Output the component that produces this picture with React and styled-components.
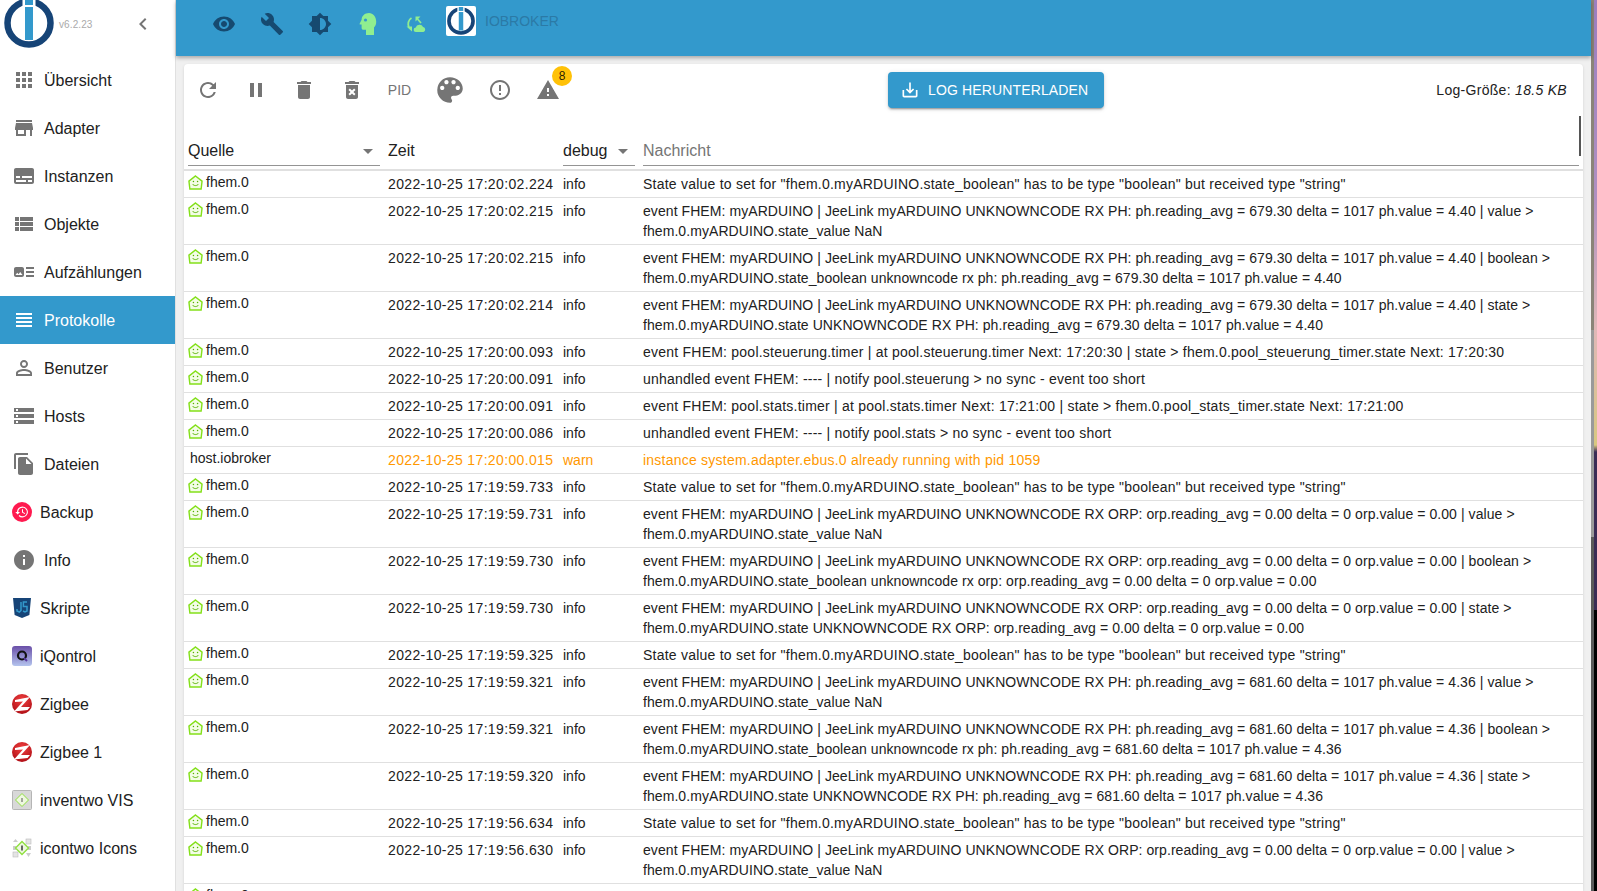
import React from "react";
import styled, { createGlobalStyle } from "styled-components";
import {
  MdApps,
  MdStore,
  MdSubtitles,
  MdViewList,
  MdArtTrack,
  MdViewHeadline,
  MdPersonOutline,
  MdStorage,
  MdFileCopy,
  MdInfo,
  MdChevronLeft,
  MdVisibility,
  MdBuild,
  MdBrightness6,
  MdRefresh,
  MdPause,
  MdDelete,
  MdDeleteForever,
  MdColorLens,
  MdErrorOutline,
  MdWarning,
  MdSaveAlt,
} from "react-icons/md";

const GlobalStyle = createGlobalStyle`
  html, body {
    margin: 0;
    height: 100%;
    overflow: hidden;
    background: #fff;
    font-family: "Liberation Sans", Arial, sans-serif;
  }
`;

const Page = styled.div`
  display: flex;
  width: 1597px;
  height: 891px;
  overflow: hidden;
`;

const Drawer = styled.aside`
  flex: 0 0 175px;
  border-right: 1px solid #e0e0e0;
  background: #fff;
`;

const DrawerHead = styled.div`
  display: flex;
  align-items: flex-start;
  height: 56px;
  padding-left: 4px;
  overflow: hidden;
  > svg {
    flex: none;
    margin-top: -2px;
  }
`;

const Version = styled.span`
  margin: 19px 0 0 5px;
  font-size: 10px;
  line-height: 12px;
  color: #aaa;
  letter-spacing: 0.1px;
`;

const Collapse = styled.span`
  display: flex;
  margin: 12px 0 0 38px;
  color: #757575;
  font-size: 24px;
`;

const NavItem = styled.div`
  display: flex;
  align-items: center;
  height: 48px;
  padding-left: 12px;
  background: ${(p) => (p.$active ? "#3399cc" : "transparent")};
  color: ${(p) => (p.$active ? "#fff" : "#212121")};
  font-size: 16px;
  svg {
    flex: none;
    color: ${(p) => (p.$active ? "#fff" : "#757575")};
  }
`;

const NavLabel = styled.span`
  margin-left: 8px;
  padding-top: 2px;
`;

const Main = styled.main`
  flex: 1;
  min-width: 0;
  display: flex;
  flex-direction: column;
  background: #f0f0f0;
`;

const AppBar = styled.header`
  flex: 0 0 56px;
  display: flex;
  align-items: flex-start;
  background: #3399cc;
  box-shadow: 0 2px 4px rgba(0, 0, 0, 0.3);
  padding-left: 24px;
  z-index: 1;
`;

const BarIcon = styled.span`
  display: flex;
  width: 48px;
  height: 48px;
  align-items: center;
  justify-content: center;
  color: #164a70;
  font-size: 24px;
`;

const BrandLogo = styled.span`
  display: flex;
  align-items: center;
  justify-content: center;
  width: 30px;
  height: 30px;
  margin: 6px 0 0 6px;
  background: #fff;
  border-radius: 2px;
`;

const BrandName = styled.span`
  margin: 13px 0 0 9px;
  font-size: 14px;
  color: #2b7aa6;
`;

const Panel = styled.section`
  flex: 1;
  min-height: 0;
  margin: 8px 8px 0 8px;
  background: #fff;
  border-radius: 4px 4px 0 0;
  box-shadow: 0 1px 3px rgba(0, 0, 0, 0.12);
  overflow: hidden;
`;

const Toolbar = styled.div`
  display: flex;
  align-items: center;
  height: 52px;
  padding-right: 16px;
`;

const ToolIcon = styled.span`
  position: relative;
  display: flex;
  flex: none;
  width: ${(p) => p.$width || 48}px;
  height: 48px;
  align-items: center;
  justify-content: center;
  color: #757575;
  font-size: ${(p) => p.$size || 24}px;
`;

const PidLabel = styled(ToolIcon)`
  font-size: 14px;
`;

const Badge = styled.span`
  position: absolute;
  top: 0;
  right: 0;
  width: 20px;
  height: 20px;
  border-radius: 50%;
  background: #ffc107;
  color: rgba(0, 0, 0, 0.87);
  font-size: 12px;
  line-height: 20px;
  text-align: center;
`;

const DownloadButton = styled.button`
  display: flex;
  align-items: center;
  gap: 8px;
  height: 36px;
  margin-left: 316px;
  padding: 0 16px 0 12px;
  border: 0;
  border-radius: 4px;
  background: #3399cc;
  color: #fff;
  font-family: inherit;
  font-size: 14px;
  letter-spacing: 0.14px;
  box-shadow: 0 3px 1px -2px rgba(0, 0, 0, 0.2), 0 2px 2px rgba(0, 0, 0, 0.14),
    0 1px 5px rgba(0, 0, 0, 0.12);
  svg {
    font-size: 20px;
  }
`;

const LogSize = styled.span`
  margin-left: auto;
  font-size: 14px;
  letter-spacing: 0.3px;
  color: #212121;
`;

const Table = styled.div`
  position: relative;
  padding-top: 14px;
`;

const HeadRow = styled.div`
  display: grid;
  grid-template-columns: 200px 175px 80px 1fr;
  height: 39px;
  border-bottom: 2px solid #e0e0e0;
`;

const HeadCell = styled.div`
  display: flex;
  align-items: center;
  justify-content: space-between;
  margin: 0 4px 3px 4px;
  padding-top: 6px;
  border-bottom: 1px solid ${(p) => (p.$plain ? "transparent" : "#949494")};
  font-size: 16px;
  color: ${(p) => (p.$muted ? "#757575" : "#212121")};
  svg {
    color: #757575;
  }
`;

const ScrollMark = styled.div`
  position: absolute;
  top: 0;
  right: 2px;
  width: 2px;
  height: 40px;
  background: #555;
`;

const LogRow = styled.div`
  display: grid;
  grid-template-columns: 200px 175px 80px 1fr;
  align-items: start;
  border-bottom: 1px solid #e0e0e0;
  min-height: ${(p) => (p.$double ? "46px" : "26px")};
  font-size: 14px;
  line-height: 20px;
  color: ${(p) => (p.$warn ? "#ff9800" : "#212121")};
`;

const Source = styled.div`
  display: flex;
  align-items: center;
  gap: 3px;
  height: 20px;
  margin-top: 1px;
  padding-left: ${(p) => (p.$host ? "6px" : "4px")};
  color: #212121;
`;

const TimeCell = styled.div`
  padding: 3px 0 3px 4px;
  letter-spacing: 0.35px;
`;

const LevelCell = styled.div`
  padding: 3px 4px;
`;

const Message = styled.div`
  padding: 3px 4px;
  white-space: pre-line;
  letter-spacing: ${(p) => (p.$caps ? "0.07px" : "0.23px")};
`;

const Edge = styled.div`
  flex: 0 0 6px;
  display: flex;
`;

const EdgeLeft = styled.div`
  flex: 1;
  background: linear-gradient(
    #8a8478 0,
    #8a8478 330px,
    #9a9a9a 330px,
    #9a9a9a 537px,
    #5a5a5a 537px
  );
`;

const EdgeRight = styled.div`
  flex: 1;
  background: linear-gradient(
    #9b7fc0 0,
    #b090c0 200px,
    #e0b8b8 330px,
    #d8c880 445px,
    #3a2c55 452px,
    #3a2c55 610px,
    #000 610px
  );
`;

const IoLogo = ({ size }) => (
  <svg width={size} height={size} viewBox="0 0 50 50">
    <circle cx="25" cy="25" r="21.5" fill="none" stroke="#164477" strokeWidth="6.5" />
    <rect x="18.5" y="-2" width="13" height="11" fill="#fff" />
    <rect x="21" y="0" width="8" height="7" fill="#3399cc" />
    <rect x="21" y="9" width="8" height="33" fill="#3399cc" />
  </svg>
);

const FhemIcon = () => (
  <svg width="15" height="15" viewBox="0 0 16 16" fill="none">
    <path d="M8 1 15 6.500 14 15H2L1 6.500Z" stroke="#84e01a" strokeWidth="1.500" fill="#f3fde6" />
    <circle cx="5.800" cy="7" r=".8" fill="#55b000" />
    <circle cx="10.200" cy="7" r=".8" fill="#55b000" />
    <path d="M4.800 9.600c1.400 2.200 5 2.200 6.400 0" stroke="#55b000" strokeWidth="1" />
  </svg>
);

const HeadIcon = () => (
  <svg width="24" height="24" viewBox="0 0 24 24">
    <path
      d="M13 1c-4.200 0-7.400 2.900-7.400 6.800l-2 3.900c-.2.400 0 .8.400.8h1.600v3.400c0 1 .8 1.800 1.800 1.800H10V23h8v-7.500c1.500-1.500 2.200-3.500 2.200-5.800C20.200 4.800 17 1 13 1z"
      fill="#90ee90"
    />
    <circle cx="9.500" cy="8" r="1.600" fill="#3399cc" />
  </svg>
);

const CloudSyncIcon = () => (
  <svg width="24" height="24" viewBox="0 0 24 24">
    <path d="M12 20a2.200 2.200 0 0 1-.3-4.400 4 4 0 0 1 7.400-.6 2.600 2.600 0 0 1 .4 5z" fill="#90ee90" />
    <path d="M7.500 6C4 8 3.500 12.500 5 15" fill="none" stroke="#90ee90" strokeWidth="1.800" />
    <path d="M2.500 14.500h5.500v5z" fill="#90ee90" />
    <path d="M13.500 7 17 11" fill="none" stroke="#90ee90" strokeWidth="1.600" />
    <path d="M11.500 4.500h5l-5 5z" fill="#90ee90" />
  </svg>
);

const JsIcon = () => (
  <svg width="20" height="20" viewBox="0 0 20 20">
    <path d="M1 0h18l-1.600 17L10 20l-7.400-3z" fill="#164477" />
    <path d="M9 4v8.500l-1.600 1.500-2.400-1V11M15 4h-3.600v4.500H15V13l-2 1-2-1" fill="none" stroke="#3399cc" strokeWidth="1.500" />
  </svg>
);

const QontrolIcon = () => (
  <svg width="20" height="20" viewBox="0 0 20 20">
    <defs>
      <linearGradient id="qontrolFill" x1="0" y1="0" x2="0" y2="1">
        <stop offset="0" stopColor="#6a4fa8" />
        <stop offset="1" stopColor="#b4c4ee" />
      </linearGradient>
    </defs>
    <rect width="20" height="20" rx="3" fill="url(#qontrolFill)" />
    <circle cx="10" cy="9.500" r="4" fill="none" stroke="#111" strokeWidth="2.200" />
    <path d="M12 12l3 3" stroke="#5b3aa0" strokeWidth="2" />
  </svg>
);

const ZigbeeIcon = () => (
  <svg width="20" height="20" viewBox="0 0 20 20">
    <defs>
      <radialGradient id="zigbeeFill" cx=".5" cy=".3" r=".8">
        <stop offset="0" stopColor="#f04040" />
        <stop offset="1" stopColor="#a80810" />
      </radialGradient>
    </defs>
    <circle cx="10" cy="10" r="10" fill="url(#zigbeeFill)" />
    <path d="M3 6 18 3 9 13H18L15.500 16 2 17.500 11 7.500 3 8z" fill="#fff" />
  </svg>
);

const BackupIcon = () => (
  <svg width="20" height="20" viewBox="0 0 20 20">
    <circle cx="10" cy="10" r="10" fill="#ff1a4f" />
    <path
      d="M10.500 4.500a5.500 5.500 0 0 0-5.500 5.500H3.300l2.400 2.400L8 10H6.200a4.300 4.300 0 1 1 1.300 3.100l-.9.900a5.500 5.500 0 1 0 3.900-9.500zM10 7.200v3.300l2.700 1.600.5-.8-2.200-1.300V7.200z"
      fill="#fff"
    />
  </svg>
);

const VisIcon = () => (
  <svg width="20" height="20" viewBox="0 0 20 20">
    <rect x=".5" y=".5" width="19" height="19" rx="1" fill="#d8d8d8" stroke="#b5b5b5" />
    <path d="M10 3.500 16.500 10 10 16.500 3.500 10Z" fill="#eef8e0" stroke="#90e040" strokeWidth="1" />
    <rect x="9.500" y="8" width="1" height="4" fill="#555" />
  </svg>
);

const IconsIcon = () => (
  <svg width="20" height="20" viewBox="0 0 20 20">
    <rect x="14" y="1" width="5" height="5" fill="#e4e4e4" stroke="#bbb" strokeWidth=".6" />
    <rect x="1" y="14" width="5" height="5" fill="#e4e4e4" stroke="#bbb" strokeWidth=".6" />
    <path d="M3.500 1 6 4H1ZM16.500 19 14 15h5ZM1 8h3v4H1ZM16 8h3v4h-3Z" fill="#ccc" />
    <path d="M10 3.500 16.500 10 10 16.500 3.500 10Z" fill="#eef8e0" stroke="#90e040" strokeWidth="1.400" />
    <rect x="9.200" y="7.500" width="1.600" height="5" fill="#444" />
  </svg>
);

const Caret = () => (
  <svg width="24" height="24" viewBox="0 0 24 24" fill="currentColor">
    <path d="M7 10l5 5 5-5z" />
  </svg>
);

const navItems = [
  { label: "Übersicht", icon: <MdApps size={24} /> },
  { label: "Adapter", icon: <MdStore size={24} /> },
  { label: "Instanzen", icon: <MdSubtitles size={24} /> },
  { label: "Objekte", icon: <MdViewList size={24} /> },
  { label: "Aufzählungen", icon: <MdArtTrack size={24} /> },
  { label: "Protokolle", icon: <MdViewHeadline size={24} />, active: true },
  { label: "Benutzer", icon: <MdPersonOutline size={24} /> },
  { label: "Hosts", icon: <MdStorage size={24} /> },
  { label: "Dateien", icon: <MdFileCopy size={24} /> },
  { label: "Backup", icon: <BackupIcon /> },
  { label: "Info", icon: <MdInfo size={24} /> },
  { label: "Skripte", icon: <JsIcon /> },
  { label: "iQontrol", icon: <QontrolIcon /> },
  { label: "Zigbee", icon: <ZigbeeIcon /> },
  { label: "Zigbee 1", icon: <ZigbeeIcon /> },
  { label: "inventwo VIS", icon: <VisIcon /> },
  { label: "icontwo Icons", icon: <IconsIcon /> },
];

const stateMsg =
  'State value to set for "fhem.0.myARDUINO.state_boolean" has to be type "boolean" but received type "string"';

const phEvent = (avg, value, kind, second) =>
  `event FHEM: myARDUINO | JeeLink myARDUINO UNKNOWNCODE RX PH: ph.reading_avg = ${avg} delta = 1017 ph.value = ${value} | ${kind} >\n${second}`;

const orpEvent = (kind, second) =>
  `event FHEM: myARDUINO | JeeLink myARDUINO UNKNOWNCODE RX ORP: orp.reading_avg = 0.00 delta = 0 orp.value = 0.00 | ${kind} >\n${second}`;

const rows = [
  ["17:20:02.224", stateMsg],
  ["17:20:02.215", phEvent("679.30", "4.40", "value", "fhem.0.myARDUINO.state_value NaN")],
  ["17:20:02.215", phEvent("679.30", "4.40", "boolean", "fhem.0.myARDUINO.state_boolean unknowncode rx ph: ph.reading_avg = 679.30 delta = 1017 ph.value = 4.40")],
  ["17:20:02.214", phEvent("679.30", "4.40", "state", "fhem.0.myARDUINO.state UNKNOWNCODE RX PH: ph.reading_avg = 679.30 delta = 1017 ph.value = 4.40")],
  ["17:20:00.093", "event FHEM: pool.steuerung.timer | at pool.steuerung.timer Next: 17:20:30 | state > fhem.0.pool_steuerung_timer.state Next: 17:20:30"],
  ["17:20:00.091", "unhandled event FHEM: ---- | notify pool.steuerung > no sync - event too short"],
  ["17:20:00.091", "event FHEM: pool.stats.timer | at pool.stats.timer Next: 17:21:00 | state > fhem.0.pool_stats_timer.state Next: 17:21:00"],
  ["17:20:00.086", "unhandled event FHEM: ---- | notify pool.stats > no sync - event too short"],
  ["17:20:00.015", "instance system.adapter.ebus.0 already running with pid 1059", "warn"],
  ["17:19:59.733", stateMsg],
  ["17:19:59.731", orpEvent("value", "fhem.0.myARDUINO.state_value NaN")],
  ["17:19:59.730", orpEvent("boolean", "fhem.0.myARDUINO.state_boolean unknowncode rx orp: orp.reading_avg = 0.00 delta = 0 orp.value = 0.00")],
  ["17:19:59.730", orpEvent("state", "fhem.0.myARDUINO.state UNKNOWNCODE RX ORP: orp.reading_avg = 0.00 delta = 0 orp.value = 0.00")],
  ["17:19:59.325", stateMsg],
  ["17:19:59.321", phEvent("681.60", "4.36", "value", "fhem.0.myARDUINO.state_value NaN")],
  ["17:19:59.321", phEvent("681.60", "4.36", "boolean", "fhem.0.myARDUINO.state_boolean unknowncode rx ph: ph.reading_avg = 681.60 delta = 1017 ph.value = 4.36")],
  ["17:19:59.320", phEvent("681.60", "4.36", "state", "fhem.0.myARDUINO.state UNKNOWNCODE RX PH: ph.reading_avg = 681.60 delta = 1017 ph.value = 4.36")],
  ["17:19:56.634", stateMsg],
  ["17:19:56.630", orpEvent("value", "fhem.0.myARDUINO.state_value NaN")],
];

export default function App() {
  return (
    <Page>
      <GlobalStyle />
      <Drawer>
        <DrawerHead>
          <IoLogo size={50} />
          <Version>v6.2.23</Version>
          <Collapse>
            <MdChevronLeft />
          </Collapse>
        </DrawerHead>
        {navItems.map((item) => (
          <NavItem key={item.label} $active={item.active}>
            {item.icon}
            <NavLabel>{item.label}</NavLabel>
          </NavItem>
        ))}
      </Drawer>
      <Main>
        <AppBar>
          <BarIcon><MdVisibility /></BarIcon>
          <BarIcon><MdBuild /></BarIcon>
          <BarIcon><MdBrightness6 /></BarIcon>
          <BarIcon><HeadIcon /></BarIcon>
          <BarIcon><CloudSyncIcon /></BarIcon>
          <BrandLogo><IoLogo size={28} /></BrandLogo>
          <BrandName>IOBROKER</BrandName>
        </AppBar>
        <Panel>
          <Toolbar>
            <ToolIcon><MdRefresh /></ToolIcon>
            <ToolIcon><MdPause /></ToolIcon>
            <ToolIcon><MdDelete /></ToolIcon>
            <ToolIcon><MdDeleteForever /></ToolIcon>
            <PidLabel $width={47}>PID</PidLabel>
            <ToolIcon $size={34} $width={53}><MdColorLens /></ToolIcon>
            <ToolIcon><MdErrorOutline /></ToolIcon>
            <ToolIcon>
              <MdWarning />
              <Badge>8</Badge>
            </ToolIcon>
            <DownloadButton>
              <MdSaveAlt />
              LOG HERUNTERLADEN
            </DownloadButton>
            <LogSize>
              Log-Größe: <em>18.5 KB</em>
            </LogSize>
          </Toolbar>
          <Table>
            <ScrollMark />
            <HeadRow>
              <HeadCell>Quelle<Caret /></HeadCell>
              <HeadCell $plain>Zeit</HeadCell>
              <HeadCell>debug<Caret /></HeadCell>
              <HeadCell $muted>Nachricht</HeadCell>
            </HeadRow>
            {rows.map(([time, text, level], i) => (
              <LogRow key={i} $warn={level === "warn"} $double={text.includes("\n")}>
                <Source $host={level === "warn"}>
                  {level === "warn" ? null : <FhemIcon />}
                  {level === "warn" ? "host.iobroker" : "fhem.0"}
                </Source>
                <TimeCell>2022-10-25 {time}</TimeCell>
                <LevelCell>{level || "info"}</LevelCell>
                <Message $caps={text.includes("JeeLink")}>{text}</Message>
              </LogRow>
            ))}
            <LogRow>
              <Source><FhemIcon />fhem.0</Source>
            </LogRow>
          </Table>
        </Panel>
      </Main>
      <Edge>
        <EdgeLeft />
        <EdgeRight />
      </Edge>
    </Page>
  );
}
